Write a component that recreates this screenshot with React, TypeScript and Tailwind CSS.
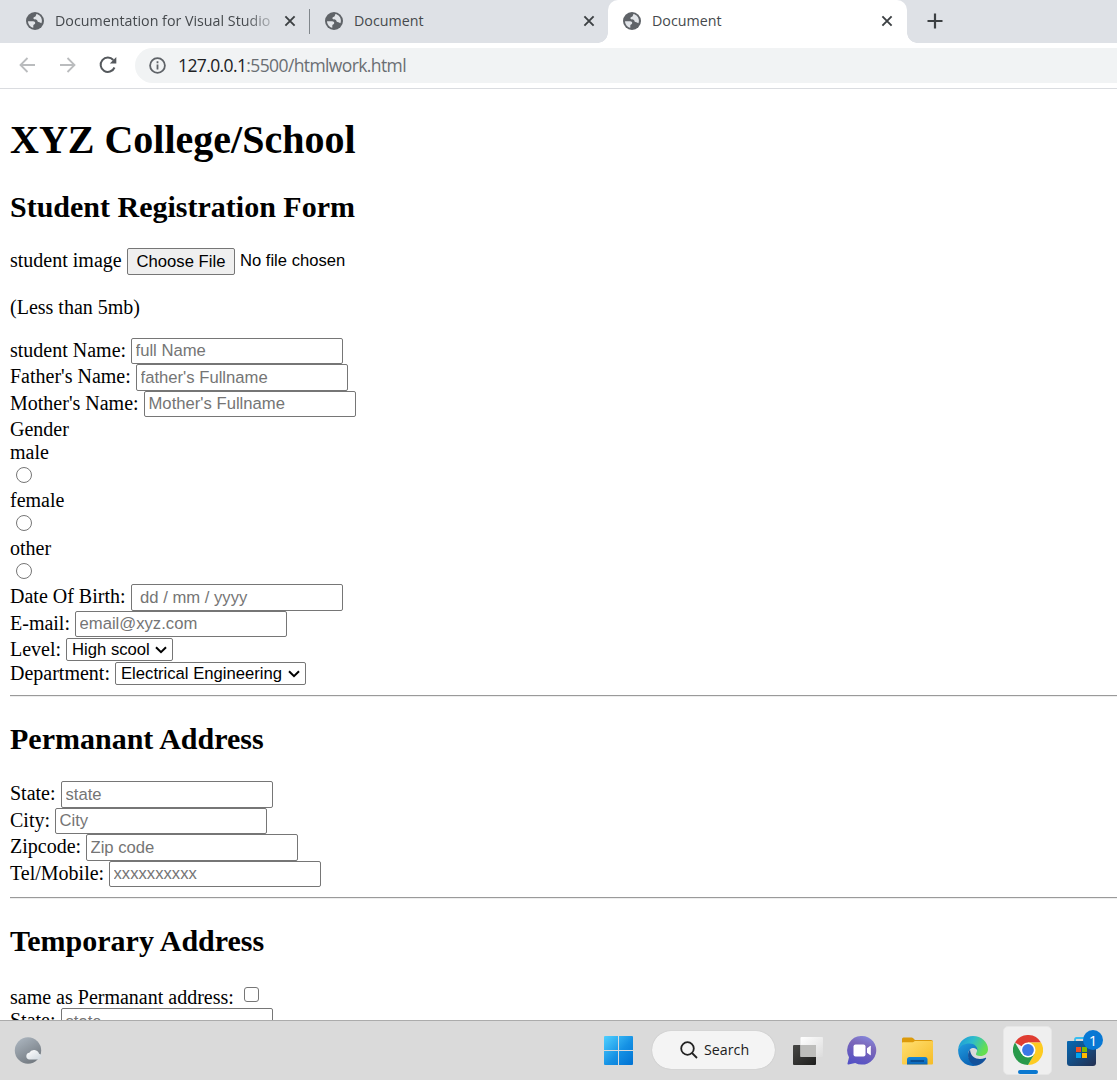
import React from "react";

const SANS = "font-['Open_Sans','Noto_Sans',sans-serif]";

function Globe() {
  return (
    <svg viewBox="0 0 18 18" className="h-[18px] w-[18px] shrink-0">
      <circle cx="9" cy="9" r="9" fill="#5f6368" />
      <path d="M2 9.300C3.500 9 5.500 9.300 7 9.200C8.800 9.200 9.600 10.400 9.100 11.600C8.800 12.600 7.500 12.500 7.300 13.500V15.800C4.300 15.200 2.100 12.600 2 9.300ZM10.400 2.100C13.700 2.800 15.900 5.600 15.900 8.800C15.900 9.800 15.700 10.500 15.400 11.200C14.600 11.200 14.300 10.300 13.400 10.200C11.900 10.100 11.500 9.700 11.300 8.600C11 7.200 9.300 7.500 8.200 7.200C7 6.900 7.200 5.500 8.300 5.100C9.400 4.800 9.900 4.100 10.400 2.100Z" fill="#e1e4e8" />
    </svg>
  );
}

function Close() {
  return (
    <svg viewBox="0 0 12 12" className="h-3 w-3 shrink-0" fill="none" stroke="#3c4043" strokeWidth="1.900">
      <path d="M1.400 1.400l9.200 9.200M10.600 1.400l-9.200 9.200" />
    </svg>
  );
}

function Tab({ title, faded }: { title: string; faded?: boolean }) {
  return (
    <div className="flex h-[43px] w-[299px] shrink-0 items-center pb-px pl-[15px] pr-[15px]">
      <Globe />
      <span className={"ml-[11px] w-[219px] whitespace-nowrap text-[14.25px] leading-5 text-[#45494d] " + (faded ? "[mask-image:linear-gradient(to_right,black_190px,transparent_226px)]" : "")}>{title}</span>
      <span className="ml-auto mr-[-1px]"><Close /></span>
    </div>
  );
}

function Field({ label, w, ph, h = "h-[27px]", box = "h-[27px]", pad = "pl-[3.5px]" }: { label: string; w: string; ph: string; h?: string; box?: string; pad?: string }) {
  return (
    <div className={"flex items-start " + h}>
      <label className={"shrink-0 whitespace-nowrap leading-[25px] " + w}>{label}</label>
      <input placeholder={ph} className={"w-[212px] rounded-[2px] border border-[#767676] bg-white font-['Liberation_Sans',Arial,sans-serif] text-[16.667px] text-black outline-none placeholder:text-[#757575] " + box + " " + pad} />
    </div>
  );
}

function Select({ label, lw, w, value }: { label: string; lw: string; w: string; value: string }) {
  return (
    <div className="flex h-6 items-start">
      <label className={"shrink-0 whitespace-nowrap leading-[25px] " + lw}>{label}</label>
      <div className={"mt-px flex h-[23px] items-center rounded-[2px] border border-[#767676] bg-white pl-[5px] font-['Liberation_Sans',Arial,sans-serif] text-[16.667px] leading-[21px] " + w}>
        <span className="whitespace-nowrap">{value}</span>
        <svg viewBox="0 0 12 8" className="ml-auto mr-[5px] h-2 w-3 shrink-0" fill="none" stroke="#000" strokeWidth="2"><path d="M1 1.200l5 5 5-5" /></svg>
      </div>
    </div>
  );
}

function Radio({ label }: { label: string }) {
  return (
    <div className="h-12">
      <div className="h-[23px] leading-[25px]">{label}</div>
      <div className="ml-[6px] mt-[3.5px] h-4 w-4 rounded-full border border-[#767676] bg-white" />
    </div>
  );
}

function Divider() {
  return <div className="mt-[10px] h-[2px] border-t border-[#9a9a9a] bg-[#eeeeee]" />;
}

function Heading({ children }: { children: React.ReactNode }) {
  return <h2 className="h-[34px] whitespace-nowrap text-[30px] font-bold leading-[34px]">{children}</h2>;
}

function Taskbar() {
  return (
    <footer className="flex h-[60px] shrink-0 items-center border-t border-[#ababab] bg-[#dadada]">
      <svg viewBox="0 0 30 28" className="ml-[14px] h-7 w-[30px] shrink-0">
        <defs>
          <linearGradient id="moon" x1="0" y1="0" x2=".6" y2="1"><stop stopColor="#b0bac4" /><stop offset="1" stopColor="#747b82" /></linearGradient>
          <linearGradient id="cloud" x1="0" y1="0" x2="1" y2="1"><stop stopColor="#fff" /><stop offset="1" stopColor="#cfd7de" /></linearGradient>
        </defs>
        <circle cx="14" cy="13.500" r="13.200" fill="url(#moon)" />
        <path d="M15 22.500a3.400 3.400 0 0 1 .3-6.700 5.300 5.300 0 0 1 9.800 1 3 3 0 0 1 .6 5.700z" fill="url(#cloud)" />
      </svg>

      <svg viewBox="0 0 29 29" className="ml-[560px] h-[29px] w-[29px] shrink-0">
        <defs><linearGradient id="win" gradientUnits="userSpaceOnUse" x1="0" y1="0" x2="29" y2="29"><stop stopColor="#4fd0ff" /><stop offset=".55" stopColor="#1591e4" /><stop offset="1" stopColor="#0071d2" /></linearGradient></defs>
        <path d="M1 0h13v14H0V1q0-1 1-1zM15 0h13q1 0 1 1v13H15zM0 15h14v14H1q-1 0-1-1zM15 15h14v13q0 1-1 1H15z" fill="url(#win)" />
      </svg>

      <div className="mb-px ml-[19px] flex h-[38px] w-[123px] shrink-0 items-center rounded-full bg-[#f4f4f4] shadow-[0_0_1px_#aaa]">
        <svg viewBox="0 0 18 18" className="ml-7 h-[18px] w-[18px]" fill="none" stroke="#222" strokeWidth="1.800"><circle cx="7.500" cy="7.500" r="6.300" /><path d="M12 12l5 5" /></svg>
        <span className={"ml-[6px] text-[14.25px] text-[#1c1c1c] " + SANS}>Search</span>
      </div>

      <svg viewBox="0 0 30 28" className="ml-[18px] h-7 w-[30px] shrink-0">
        <defs>
          <linearGradient id="tv1" x1="0" y1="0" x2="1" y2="1"><stop stopColor="#484846" /><stop offset="1" stopColor="#1e1e1d" /></linearGradient>
          <linearGradient id="tv2" x1="0" y1="0" x2="1" y2="1"><stop stopColor="#fff" /><stop offset="1" stopColor="#dcdcdc" /></linearGradient>
        </defs>
        <rect x="0" y="8" width="23" height="20" rx="1" fill="url(#tv1)" />
        <rect x="7.500" y="0" width="22.500" height="20" rx="1" fill="url(#tv2)" />
        <rect x="7.500" y="8" width="15.500" height="12" fill="#bdbdbb" />
      </svg>

      <svg viewBox="0 0 30 29" className="ml-6 h-[29px] w-[30px] shrink-0">
        <defs><linearGradient id="chat" x1=".7" y1="0" x2=".3" y2="1"><stop stopColor="#8587dc" /><stop offset=".35" stopColor="#7b67b9" /><stop offset="1" stopColor="#5451c5" /></linearGradient></defs>
        <path d="M15 0a14.300 14.300 0 1 1-6.800 26.900L1.500 28.400Q.2 28.600.5 27.400L2 21.200A14.300 14.300 0 0 1 15 0z" fill="url(#chat)" />
        <rect x="6.500" y="8.500" width="12" height="12" rx="2" fill="#fff" />
        <path d="M20 12.200l3-2.300q.8-.4.8.4v8.400q0 .8-.8.4l-3-2.300z" fill="#fff" />
      </svg>

      <svg viewBox="0 0 31 28" className="ml-[25px] h-7 w-[31px] shrink-0">
        <defs>
          <linearGradient id="fold" x1="0" y1="0" x2="1" y2="1"><stop stopColor="#ffdf72" /><stop offset="1" stopColor="#f6bc26" /></linearGradient>
          <linearGradient id="dock" x1="0" y1="0" x2="0" y2="1"><stop stopColor="#1287d9" /><stop offset="1" stopColor="#0b64b5" /></linearGradient>
        </defs>
        <path d="M0 2q0-1.500 1.500-1.500h8q1 0 1.700.7L13 3h16q2 0 2 1.500V10H0z" fill="#dc9a0b" />
        <path d="M0 6q0-.8.8-.8H10q1 0 1.800-.5l1-.7H30q1 0 1 1v21.500q0 1-1 1H1q-1 0-1-1z" fill="url(#fold)" />
        <path d="M5 27.500v-5q0-2.500 2.500-2.500h15.500q2.500 0 2.500 2.500v5z" fill="url(#dock)" />
        <path d="M8.500 24h13.500" stroke="#07407e" strokeWidth="1.400" />
      </svg>

      <svg viewBox="0 0 30 30" className="ml-[25px] h-[30px] w-[30px] shrink-0">
        <defs>
          <linearGradient id="e1" x1="0" y1="0" x2="1" y2=".4"><stop stopColor="#1b94dc" /><stop offset=".5" stopColor="#2ebccb" /><stop offset="1" stopColor="#65df50" /></linearGradient>
          <linearGradient id="e2" x1="0" y1="0" x2=".5" y2="1"><stop stopColor="#229ee0" /><stop offset="1" stopColor="#0a63b5" /></linearGradient>
        </defs>
        <path d="M.2 13C1 5.500 7.500 0 15 0c8.500 0 15 6.200 15 13.200 0 4.300-3.500 6.800-7.600 6.800-3.600 0-5-1.200-4.300-2.400C21 12.800 17 9 11.500 9 6 9 1.500 11 .2 13z" fill="url(#e1)" />
        <path d="M.2 13C2 9.700 6.300 7.400 11.500 7.400c4.900 0 8.300 3.300 7.900 7.100-.7-1.800-2.500-2.900-4.800-2.500C9 13 7 24 19 29.500 9.500 32-.8 25 .2 13z" fill="url(#e2)" />
        <path d="M12 13.500C8 18 10 28.500 19 29.500c4-1 7-3.400 9-6.800.4-.8-.2-1.200-.9-.8-6 2.600-14.500.8-15.100-8.400z" fill="#12519b" />
      </svg>

      <div className="ml-[15px] flex h-[49px] w-[49px] shrink-0 flex-col items-center rounded-[5px] border border-[#e6e6e6] bg-[#efefef]">
        <svg viewBox="0 0 30 30" className="mt-[8px] h-[30px] w-[30px] shrink-0">
          <path d="M15 15L2 7.500A15 15 0 0 1 28 7.500H15z" fill="#df3d32" />
          <path d="M15 7.500h13A15 15 0 0 1 15 30l6.500-11.200z" fill="#fdcb22" />
          <path d="M2 7.500A15 15 0 0 0 15 30l6.500-11.200L15 15 8.500 18.800z" fill="#28994a" />
          <circle cx="15" cy="15" r="7.500" fill="#fff" /><circle cx="15" cy="15" r="5.900" fill="#3b78e7" />
        </svg>
        <div className="mt-[5px] h-1 w-5 shrink-0 rounded-full bg-[#0a78d0]" />
      </div>

      <svg viewBox="0 0 36 37" className="mb-[5px] ml-[15px] h-[37px] w-9 shrink-0">
        <defs><linearGradient id="store" x1="0" y1="0" x2="1" y2="1"><stop stopColor="#0669b4" /><stop offset="1" stopColor="#242f50" /></linearGradient></defs>
        <path d="M8 12V9.500q0-1.500 1.500-1.500H22" fill="none" stroke="#38bdf0" strokeWidth="1.800" />
        <path d="M0 12q0-1 1-1h27q1 0 1 1v21q0 3-3 3H3q-3 0-3-3z" fill="url(#store)" />
        <path d="M9 17h5v5H9z" fill="#f25022" /><path d="M15 17h5v5h-5z" fill="#7fba00" />
        <path d="M9 23h5v5H9z" fill="#00a4ef" /><path d="M15 23h5v5h-5z" fill="#ffb900" />
        <circle cx="26" cy="10" r="10" fill="#0878d4" />
        <text x="26" y="15.500" textAnchor="middle" fontSize="15" fill="#fff" fontFamily="Open Sans">1</text>
      </svg>
    </footer>
  );
}

export default function App() {
  return (
    <div className="flex h-[1080px] w-[1117px] flex-col overflow-hidden bg-white">
      <header className={"shrink-0 " + SANS}>
        <div className="flex h-[43px] bg-[#dee1e6] pl-[11px]">
          <Tab title="Documentation for Visual Studio" faded />
          <div className="-ml-px mt-[9px] h-[25px] w-px shrink-0 bg-[#80868b]" />
          <Tab title="Document" />
          <div className="relative -ml-px w-[299px] shrink-0 rounded-t-[10px] bg-white">
            <div className="absolute -left-[10px] bottom-0 h-[10px] w-[10px] bg-[radial-gradient(circle_at_0_0,transparent_9.5px,white_10px)]" />
            <div className="absolute -right-[10px] bottom-0 h-[10px] w-[10px] bg-[radial-gradient(circle_at_100%_0,transparent_9.5px,white_10px)]" />
            <Tab title="Document" />
          </div>
          <svg viewBox="0 0 16 16" className="ml-5 mt-[13px] h-4 w-4" stroke="#3c4043" strokeWidth="2.200"><path d="M8 .5v15M.5 8h15" /></svg>
        </div>
        <div className="flex h-[46px] items-center border-b border-[#dadce0]">
          <svg viewBox="0 0 16 16" className="mb-px ml-[19px] h-4 w-4 shrink-0" fill="none" stroke="#babcbe" strokeWidth="1.800"><path d="M16 8H1.500M8.500 1L1.500 8l7 7" /></svg>
          <svg viewBox="0 0 16 16" className="mb-px ml-[25px] h-4 w-4 shrink-0" fill="none" stroke="#babcbe" strokeWidth="1.800"><path d="M0 8h14.500M7.500 1l7 7-7 7" /></svg>
          <svg viewBox="0 0 18 18" className="mb-px ml-[23px] h-[18px] w-[18px] shrink-0"><path d="M15.500 11.500A7.200 7.200 0 1 1 14.300 4" fill="none" stroke="#54585c" strokeWidth="2" /><path d="M17.300 1v6.500h-6.500z" fill="#54585c" /></svg>
          <div className="ml-[18px] flex h-[35px] flex-1 items-center rounded-l-full bg-[#f1f3f4] pl-[14px]">
            <svg viewBox="0 0 17 17" className="h-[17px] w-[17px] shrink-0" fill="none" stroke="#5f6368" strokeWidth="1.800"><circle cx="8.500" cy="8.500" r="7.400" /><path d="M8.500 7.500v5M8.500 4.300v2" /></svg>
            <span className="ml-[12px] whitespace-nowrap text-[17.5px] tracking-[-0.61px] text-[#6a6e73]"><span className="text-[#202124]">127.0.0.1</span>:5500/htmlwork.html</span>
          </div>
        </div>
      </header>

      <main className="min-h-0 flex-1 overflow-hidden pl-[10px] font-['Liberation_Serif','Times_New_Roman',serif] text-[20px] leading-[25px] text-black">
        <h1 className="mt-[27px] h-[46px] whitespace-nowrap text-[40px] font-bold leading-[48px]">XYZ College/School</h1>
        <div className="mt-7"><Heading>Student Registration Form</Heading></div>
        <div className="mt-6 flex h-[27px] items-start">
          <label className="w-[117px] whitespace-nowrap">student image</label>
          <button className="h-[27px] w-[108px] whitespace-nowrap rounded-[2px] border border-[#767676] bg-[#efefef] font-['Liberation_Sans',Arial,sans-serif] text-[16.667px] leading-[25px]">Choose File</button>
          <span className="ml-[5px] whitespace-nowrap font-['Liberation_Sans',Arial,sans-serif] text-[16.6px] leading-[25px]">No file chosen</span>
        </div>
        <p className="mb-5 mt-5 h-[23px]">(Less than 5mb)</p>
        <Field label="student Name:" w="w-[121px]" ph="full Name" h="h-[26px]" box="h-[26px]" />
        <Field label="Father's Name:" w="w-[126px]" ph="father's Fullname" />
        <Field label="Mother's Name:" w="w-[134px]" ph="Mother's Fullname" h="h-[26px]" box="h-[26px]" />
        <div className="h-[23px]">Gender</div>
        <Radio label="male" />
        <Radio label="female" />
        <Radio label="other" />
        <Field label="Date Of Birth:" w="w-[121px]" ph="dd / mm / yyyy" pad="pl-[8px]" />
        <Field label="E-mail:" w="w-[65px]" ph="email@xyz.com" h="h-[26px]" box="h-[26px]" />
        <Select label="Level:" lw="w-[56px]" w="w-[107px]" value="High scool" />
        <Select label="Department:" lw="w-[105px]" w="w-[191px]" value="Electrical Engineering" />
        <Divider />
        <div className="mb-[25px] mt-[25px]"><Heading>Permanant Address</Heading></div>
        <Field label="State:" w="w-[51px]" ph="state" />
        <Field label="City:" w="w-[45px]" ph="City" h="h-[26px]" box="h-[26px]" />
        <Field label="Zipcode:" w="w-[76px]" ph="Zip code" />
        <Field label="Tel/Mobile:" w="w-[99px]" ph="xxxxxxxxxx" h="h-[26px]" box="h-[26px]" />
        <Divider />
        <div className="mb-[26px] mt-[25px]"><Heading>Temporary Address</Heading></div>
        <div className="flex h-6 items-start">
          <label className="w-[234px] whitespace-nowrap leading-[27px]">same as Permanant address:</label>
          <div className="mt-[3px] h-[15px] w-[15px] rounded-[3px] border border-[#767676] bg-white" />
        </div>
        <Field label="State:" w="w-[51px]" ph="state" />
      </main>
      <Taskbar />
    </div>
  );
}
